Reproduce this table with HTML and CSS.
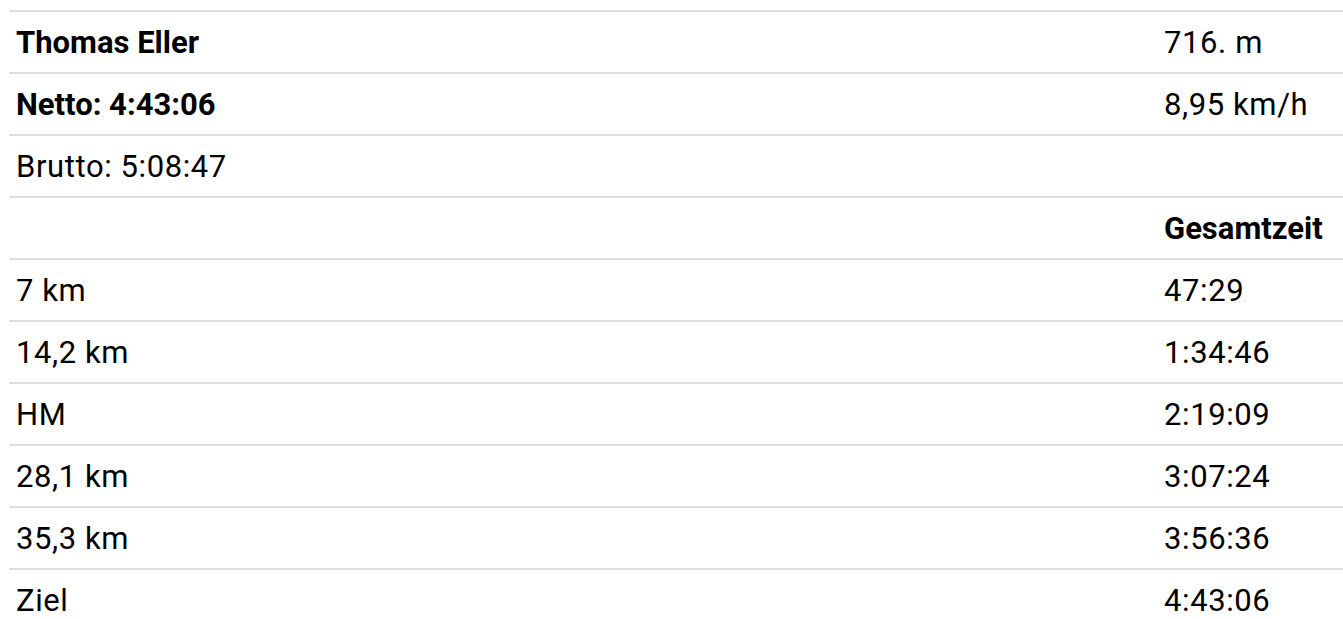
FILE: index.html
```html
<!DOCTYPE html>
<html lang="de">
<head>
<meta charset="utf-8">
<title>Thomas Eller</title>
<link rel="stylesheet" href="styles.css">
</head>
<body>
<table class="results">
  <tbody>
    <tr><td class="strong">Thomas Eller</td><td class="val">716. m</td></tr>
    <tr><td class="strong">Netto: 4:43:06</td><td class="val">8,95 km/h</td></tr>
    <tr><td>Brutto: 5:08:47</td><td class="val"></td></tr>
    <tr><td></td><td class="val strong">Gesamtzeit</td></tr>
    <tr><td>7 km</td><td class="val">47:29</td></tr>
    <tr><td>14,2 km</td><td class="val">1:34:46</td></tr>
    <tr><td>HM</td><td class="val">2:19:09</td></tr>
    <tr><td>28,1 km</td><td class="val">3:07:24</td></tr>
    <tr><td>35,3 km</td><td class="val">3:56:36</td></tr>
    <tr><td>Ziel</td><td class="val">4:43:06</td></tr>
  </tbody>
</table>
</body>
</html>
```

FILE: styles.css
```css
html, body {
  background: #fff;
}
body {
  margin: 10px 0 0 9px;
  font-family: Roboto, "Liberation Sans", Arial, sans-serif;
  font-size: 31px;
  color: #000;
  overflow: hidden;
}
.results {
  width: 1334px;
  border-collapse: collapse;
  table-layout: fixed;
}
.results td {
  height: 58px;
  padding: 2px 7px 0;
  border-top: 2px solid #dcdcdc;
  vertical-align: middle;
  line-height: 36px;
  letter-spacing: 0.6px;
  box-sizing: content-box;
}
.results td:first-child {
  width: 1134px;
}
.results td.strong {
  font-weight: bold;
  letter-spacing: 0;
}
```
